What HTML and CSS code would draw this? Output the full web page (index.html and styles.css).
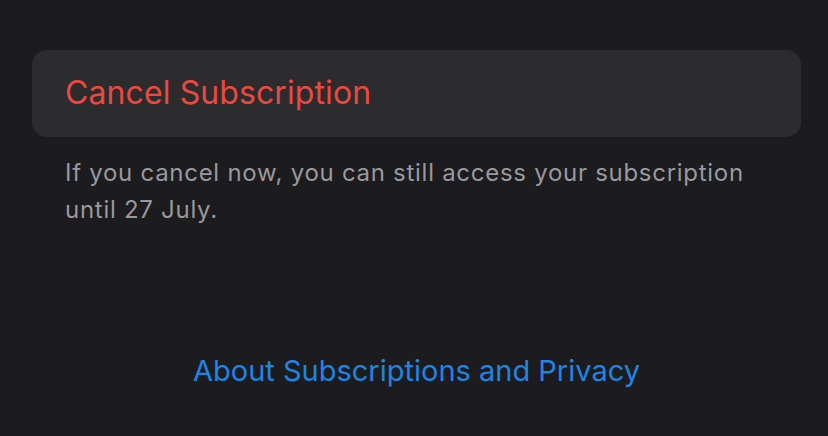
FILE: index.html
```html
<!DOCTYPE html>
<html lang="en">
<head>
  <meta charset="UTF-8">
  <title>Cancel Subscription</title>
  <link rel="stylesheet" href="styles.css">
</head>
<body>
<div class="page">
  <div class="group">
    <button class="cancelBtn">Cancel Subscription</button>
  </div>
  <p class="footnote">If you cancel now, you can still access your subscription until 27 July.</p>
  <a class="aboutLink" href="#">About Subscriptions and Privacy</a>
</div>
</body>
</html>
```

FILE: styles.css
```css
/*初始化样式*/
html, body {
  margin: 0;
  padding: 0;
}
body {
  background-color: #1c1c1e;
  font-family: Inter, "Noto Sans", sans-serif;
  width: 828px;
  height: 436px;
  overflow: hidden;
}
.page {
  padding: 50px 27px 0 32px;
  display: flex;
  flex-direction: column;
}
.group {
  background-color: #2c2c2e;
  border-radius: 15px;
  height: 87px;
  display: flex;
  align-items: center;
}
.cancelBtn {
  border: none;
  background: none;
  padding: 0 0 2px 33px;
  font-family: inherit;
  font-size: 32px;
  letter-spacing: 0.1px;
  color: #e9493f;
  text-align: left;
}
.footnote {
  width: 700px;
  margin: 17px 0 0 33px;
  font-size: 24px;
  letter-spacing: 0.72px;
  line-height: 37px;
  color: #98989d;
}
.aboutLink {
  margin-top: 125px;
  align-self: center;
  font-size: 29px;
  color: #1f84e3;
  text-decoration: none;
}
```
